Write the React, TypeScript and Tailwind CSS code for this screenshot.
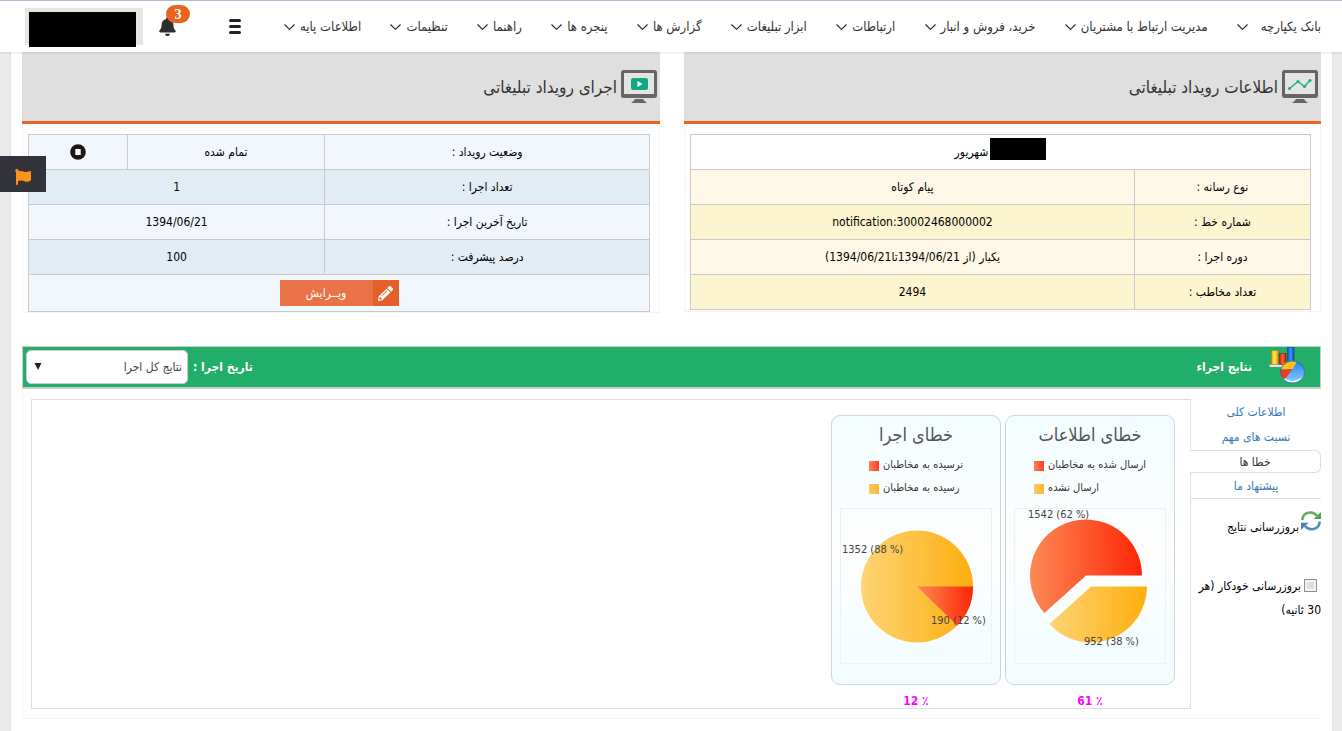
import React from "react";
import { FaBell, FaFlag, FaPencilAlt } from "react-icons/fa";

const navItems = [
  "بانک یکپارچه",
  "مدیریت ارتباط با مشتریان",
  "خرید، فروش و انبار",
  "ارتباطات",
  "ابزار تبلیغات",
  "گزارش ها",
  "پنجره ها",
  "راهنما",
  "تنظیمات",
  "اطلاعات پایه",
];

const tabs = ["اطلاعات کلی", "نسبت های مهم", "خطا ها", "پیشنهاد ما"];

function Chevron() {
  return (
    <svg width="11" height="6" viewBox="0 0 11 6" fill="none" stroke="#222" strokeWidth="1.1" aria-hidden="true">
      <path d="M0.5 0.5 L5.5 5.3 L10.5 0.5" />
    </svg>
  );
}

function Monitor({ children }: { children: React.ReactNode }) {
  return (
    <svg width="36" height="33" viewBox="0 0 36 33" aria-hidden="true">
      <rect x="1.5" y="1.5" width="33" height="25" rx="1" fill="#e4e4e4" stroke="#666" strokeWidth="3" />
      <path d="M1 25.5 H35" stroke="#666" strokeWidth="3" />
      <path d="M14 29 H22 Q23 31 26 33 H10 Q13 31 14 29Z" fill="#666" />
      {children}
    </svg>
  );
}

function PanelHeader({ title, icon }: { title: string; icon: React.ReactNode }) {
  return (
    <header className="flex h-[72px] items-center gap-1 border-b-[3px] border-[#e8651f] bg-[#dfdfdf] pr-[3px]">
      {icon}
      <h2 className="text-[17px] leading-6 text-[#333]">{title}</h2>
    </header>
  );
}

function BarsAndPie() {
  return (
    <svg className="self-start" width="36" height="37" viewBox="0 0 36 37" aria-hidden="true">
      <defs>
        <linearGradient id="barYellow">
          <stop offset="0" stopColor="#f7a800" />
          <stop offset="0.5" stopColor="#ffe45c" />
          <stop offset="1" stopColor="#f29a00" />
        </linearGradient>
        <linearGradient id="barRed">
          <stop offset="0" stopColor="#c81c00" />
          <stop offset="0.5" stopColor="#ff6a3c" />
          <stop offset="1" stopColor="#b81400" />
        </linearGradient>
        <linearGradient id="barBlue">
          <stop offset="0" stopColor="#0b4fc4" />
          <stop offset="0.5" stopColor="#3f9bff" />
          <stop offset="1" stopColor="#0a48b8" />
        </linearGradient>
        <linearGradient id="pieBlue" x1="0" y1="0" x2="0" y2="1">
          <stop offset="0" stopColor="#2a80ee" />
          <stop offset="1" stopColor="#7cc8ff" />
        </linearGradient>
      </defs>
      <path d="M0.500 17.500 H18 V20 H0.500Z" fill="#eee" stroke="#999" strokeWidth="0.5" />
      <rect x="2.500" y="3.500" width="6.500" height="14" fill="url(#barYellow)" stroke="#b97800" strokeWidth="0.5" />
      <rect x="10.500" y="6.500" width="6.500" height="11" fill="url(#barRed)" stroke="#8a1200" strokeWidth="0.5" />
      <rect x="18.500" y="0.500" width="6.500" height="17" fill="url(#barBlue)" stroke="#0a3c90" strokeWidth="0.5" />
      <ellipse cx="23.500" cy="25.500" rx="12" ry="10.500" fill="#d9e9f8" />
      <ellipse cx="23.500" cy="24" rx="12" ry="10" fill="url(#pieBlue)" />
      <path d="M23.500 22 L11.700 22.500 A12 10.500 0 0 1 28 14.500 Z" fill="#fcc419" />
      <path d="M23.500 22 L11.600 22.500 A12 11 0 0 0 15.500 33 Z" fill="#e8401c" />
      <path d="M15 31.500 Q23 38.500 32 31.500" fill="none" stroke="#fff" strokeOpacity="0.75" strokeWidth="1.500" />
      <ellipse cx="23.500" cy="25" rx="12" ry="11" fill="none" stroke="#1c55a5" strokeWidth="0.700" />
    </svg>
  );
}

function RefreshIcon() {
  return (
    <svg width="20" height="20" viewBox="0 0 20 20" fill="none" aria-hidden="true">
      <path d="M1.300 9 C1.800 1 11.500 -0.800 16 4.800" stroke="#5fae62" strokeWidth="2.600" />
      <path d="M20 1 V8 H12.500Z" fill="#4fa353" />
      <path d="M18.700 10.500 C18.200 18.700 8.500 20.500 4 15" stroke="#5288bd" strokeWidth="2.600" />
      <path d="M0 18.700 V11.700 H7.500Z" fill="#477fb5" />
    </svg>
  );
}

function Gradients({ id }: { id: string }) {
  return (
    <defs>
      <linearGradient id={id + "Red"}>
        <stop offset="0" stopColor="#fb8a55" />
        <stop offset="1" stopColor="#ff2606" />
      </linearGradient>
      <linearGradient id={id + "Yellow"}>
        <stop offset="0" stopColor="#fdd475" />
        <stop offset="1" stopColor="#ffae0d" />
      </linearGradient>
    </defs>
  );
}

function ErrorChart(props: { title: string; legend: string[]; percent: string; children: React.ReactNode }) {
  return (
    <figure className="flex w-[170px] flex-col items-center">
      <div className="flex h-[270px] w-full shrink-0 flex-col items-center rounded-[9px] border border-[#c9dadd] bg-linear-to-b from-[#f3fdff] via-[#fefefe] to-[#f1fcff] pt-[7px]">
        <h3 className="text-[18px] leading-6 text-[#545454]">{props.title}</h3>
        <ul className="flex flex-col pt-[7px] text-[11px] text-[#333]">
          <li className="flex h-[23px] items-center justify-end gap-1" dir="ltr">
            <span className="order-1 flex-1 text-right" dir="rtl">{props.legend[0]}</span>
            <span className="size-[10px] bg-linear-to-r from-[#fb8055] to-[#ff3a1c]" />
          </li>
          <li className="flex h-[23px] items-center gap-1" dir="ltr">
            <span className="size-[10px] bg-linear-to-r from-[#fdcb60] to-[#ffb52a]" />
            <span dir="rtl">{props.legend[1]}</span>
          </li>
        </ul>
        <svg className="mt-[8px] overflow-visible border border-[#ecf3f5]" width="152" height="156" viewBox="-1 0 150 154" direction="ltr" fontSize="11" fill="#444">
          {props.children}
        </svg>
      </div>
      <figcaption className="pt-2 text-[12px] leading-4 font-bold text-[#f0f]" dir="ltr">{props.percent}</figcaption>
    </figure>
  );
}

const cell = "h-[35px] border border-[#c8cacc] text-center";

export default function App() {
  return (
    <div dir="rtl" lang="fa" className="min-h-screen bg-[#ebebeb] font-['DejaVu_Sans_Condensed','DejaVu_Sans',sans-serif] text-[12px] text-black">
      <header className="relative flex h-[52px] items-center justify-between border-t border-[#a9bad3] bg-white pr-[21px] pl-[25px] shadow-[0_1px_2px_rgba(0,0,0,0.10)]">
        <nav className="flex w-[1037px] items-center justify-between text-[13px] text-[#333]">
          {navItems.map((item) => (
            <a key={item} href="#" className="flex items-center justify-between gap-[5px] whitespace-nowrap first:min-w-[84px]">
              {item}
              <Chevron />
            </a>
          ))}
        </nav>
        <div className="flex items-center">
          <button type="button" aria-label="فهرست" className="ml-[52px] flex w-[12px] flex-col gap-[3px]">
            <span className="h-[3px] w-full rounded-sm bg-[#222]" />
            <span className="h-[3px] w-full rounded-sm bg-[#222]" />
            <span className="h-[3px] w-full rounded-sm bg-[#222]" />
          </button>
          <button type="button" aria-label="اعلان ها" className="relative ml-[15px] text-[#2e2e2e]">
            <FaBell size={19} />
            <span className="absolute -top-[12px] left-[8px] flex h-[18px] w-6 items-center justify-center rounded-full bg-[#e8651f] font-['Liberation_Serif',serif] text-[14px] font-bold text-white">3</span>
          </button>
          <div className="flex h-[37px] w-[118px] items-end justify-end bg-[#e5e5e5] pl-1">
            <div className="-mb-[2px] h-[35px] w-[107px] bg-black" />
          </div>
        </div>
      </header>

      <button type="button" aria-label="نشان" className="absolute top-[156px] left-0 flex h-9 w-[46px] items-center justify-center bg-[#33333b] pt-[5px] text-[#ff9219]">
        <FaFlag size={16} />
      </button>

      <main className="mr-[9px] ml-[10px] min-h-[calc(100vh-52px)] border-x border-[#e3e3e3] bg-white pr-[11px] pb-3 pl-[11px]">
        <div className="grid grid-cols-[637fr_638fr] gap-x-6">
          <section>
            <PanelHeader
              title="اطلاعات رویداد تبلیغاتی"
              icon={
                <Monitor>
                  <path d="M7.500 18.500 L16 11.500 L22.500 16.500 L28 10.500" fill="none" stroke="#1aa987" strokeWidth="1.300" />
                  <g fill="#1aa987">
                    <circle cx="7.500" cy="18.500" r="1.500" />
                    <circle cx="16" cy="11.500" r="1.500" />
                    <circle cx="22.500" cy="16.500" r="1.500" />
                    <circle cx="28" cy="10.500" r="1.500" />
                  </g>
                </Monitor>
              }
            />
            <div className="border-x border-b border-[#f4f4f4] pt-[10px] pr-[9px] pb-px pl-[5px]">
              <table className="w-full table-fixed border-collapse">
                <colgroup>
                  <col className="w-[28.4%]" />
                  <col />
                </colgroup>
                <tbody>
                  <tr>
                    <td colSpan={2} className={cell}>
                      <span className="flex items-center justify-center gap-[2px] pb-[6px]">
                        <span className="h-[22px] w-14 bg-black" />
                        <span className="pt-[6px]">شهریور</span>
                      </span>
                    </td>
                  </tr>
                  <tr className="bg-[#fdf9e6]">
                    <th className={`${cell} font-normal`}>نوع رسانه :</th>
                    <td className={cell}>پیام کوتاه</td>
                  </tr>
                  <tr className="bg-[#fcf5cf]">
                    <th className={`${cell} font-normal`}>شماره خط :</th>
                    <td className={cell} dir="ltr">notification:30002468000002</td>
                  </tr>
                  <tr className="bg-[#fdf9e6]">
                    <th className={`${cell} font-normal`}>دوره اجرا :</th>
                    <td className={cell}>
                      یکبار (از <bdi>1394/06/21</bdi>تا<bdi>1394/06/21</bdi>)
                    </td>
                  </tr>
                  <tr className="bg-[#fcf5cf]">
                    <th className={`${cell} font-normal`}>تعداد مخاطب :</th>
                    <td className={cell}>2494</td>
                  </tr>
                </tbody>
              </table>
            </div>
          </section>

          <section>
            <PanelHeader
              title="اجرای رویداد تبلیغاتی"
              icon={
                <Monitor>
                  <rect x="10" y="8" width="17" height="12" rx="2" fill="#12a886" />
                  <path d="M16.500 11 L21.500 14 L16.500 17Z" fill="#fff" />
                </Monitor>
              }
            />
            <div className="border-x border-b border-[#f4f4f4] pt-[10px] pr-[9px] pl-[5px]">
              <table className="w-full table-fixed border-collapse">
                <colgroup>
                  <col className="w-[52.3%]" />
                  <col className="w-[31.8%]" />
                  <col />
                </colgroup>
                <tbody>
                  <tr className="bg-[#f2f7fd]">
                    <th className={`${cell} font-normal`}>وضعیت رویداد :</th>
                    <td className={cell}>تمام شده</td>
                    <td className={cell}>
                      <svg className="mx-auto" width="16" height="16" viewBox="0 0 16 16" role="img" aria-label="متوقف">
                        <circle cx="8" cy="8" r="7.800" fill="#1c1718" />
                        <rect x="5.300" y="5" width="5.400" height="6" fill="#fff" />
                      </svg>
                    </td>
                  </tr>
                  <tr className="bg-[#e1ecf5]">
                    <th className={`${cell} font-normal`}>تعداد اجرا :</th>
                    <td colSpan={2} className={cell}>1</td>
                  </tr>
                  <tr className="bg-[#f2f7fd]">
                    <th className={`${cell} font-normal`}>تاریخ آخرین اجرا :</th>
                    <td colSpan={2} className={cell}>1394/06/21</td>
                  </tr>
                  <tr className="bg-[#e1ecf5]">
                    <th className={`${cell} font-normal`}>درصد پیشرفت :</th>
                    <td colSpan={2} className={cell}>100</td>
                  </tr>
                  <tr className="bg-[#f2f7fd]">
                    <td colSpan={3} className="h-[37px] border border-[#c8cacc]">
                      <button type="button" className="mx-auto flex h-[26px] w-[119px] bg-[#e97346] text-white">
                        <span className="flex h-full w-[26px] items-center justify-center bg-[#e55f2b]">
                          <FaPencilAlt size={15} />
                        </span>
                        <span className="flex h-full flex-1 items-center justify-center">ویــرایش</span>
                      </button>
                    </td>
                  </tr>
                </tbody>
              </table>
            </div>
          </section>
        </div>

        <section className="mt-[33px]">
          <header className="flex h-[43px] items-center justify-between border border-b-2 border-[#cbcbcb] bg-[#21ae69] pr-[15px] pl-[3px] font-bold text-white">
            <div className="flex h-full items-center gap-[17px]">
              <BarsAndPie />
              <h2>نتایج اجراء</h2>
            </div>
            <div className="flex items-center gap-[5px]">
              <label htmlFor="run-date">تاریخ اجرا :</label>
              <div className="relative">
                <select id="run-date" className="h-[34px] w-[162px] appearance-none rounded-[5px] border border-[#ccc] bg-white pr-[5px] pl-6 text-[12px] font-normal text-[#444]">
                  <option>نتایج کل اجرا</option>
                </select>
                <svg className="pointer-events-none absolute top-[13px] left-[8px]" width="8" height="7" viewBox="0 0 8 7" aria-hidden="true">
                  <path d="M0.500 0 H7.500 L4 7Z" fill="#222" />
                </svg>
              </div>
            </div>
          </header>

          <div className="flex border-b border-l border-[#f4f4f4] pt-[10px] pb-[9px] pl-2">
            <aside className="w-[131px] shrink-0">
              <nav className="flex flex-col border-b border-[#dedede] text-center text-[#337ab7]">
                {tabs.map((tab) =>
                  tab === "خطا ها" ? (
                    <a key={tab} href="#" className="mt-px flex h-[23px] items-center justify-center rounded-r-[6px] border border-l-0 border-[#dedede] text-[#333]">{tab}</a>
                  ) : (
                    <a key={tab} href="#" className="flex h-[25px] items-center justify-center border-l border-[#dedede]">{tab}</a>
                  )
                )}
              </nav>
              <div className="flex h-[210px] flex-col border-l border-[#dedede]">
                <button type="button" className="mt-[12px] flex items-start gap-[2px]">
                  <RefreshIcon />
                  <span className="pt-[7px]">بروزرسانی نتایج</span>
                </button>
                <label className="mt-[38px] leading-6">
                  <input type="checkbox" className="mr-1 ml-[3px] size-[13px] appearance-none border border-[#8e8f8f] bg-[#dedede] align-[-2px] shadow-[inset_0_0_0_2px_#f4f4f4]" />
                  بروزرسانی خودکار (هر 30 ثانیه)
                </label>
              </div>
            </aside>

            <div className="flex h-[310px] flex-1 gap-1 border-y border-l border-[#dedede] pt-[15px] pr-[15px]">
              <ErrorChart title="خطای اطلاعات" legend={["ارسال شده به مخاطبان", "ارسال نشده"]} percent="61 ٪">
                <Gradients id="info" />
                <path d="M70 66.500 L126 66.500 A56 56 0 1 0 28.400 104 Z" fill="url(#infoRed)" />
                <path d="M75 77.500 L131 77.500 A56 56 0 0 1 33.400 115 Z" fill="url(#infoYellow)" />
                <text x="12" y="9">1542 (62 %)</text>
                <text x="68" y="136">952 (38 %)</text>
              </ErrorChart>
              <ErrorChart title="خطای اجرا" legend={["نرسیده به مخاطبان", "رسیده به مخاطبان"]} percent="12 ٪">
                <Gradients id="run" />
                <circle cx="75" cy="77.500" r="56" fill="url(#runYellow)" />
                <path d="M75 77.500 L131 77.500 A56 56 0 0 1 115.300 116.400 Z" fill="url(#runRed)" />
                <text x="0" y="44">1352 (88 %)</text>
                <text x="89" y="115">190 (12 %)</text>
              </ErrorChart>
            </div>
          </div>
        </section>
      </main>
    </div>
  );
}
